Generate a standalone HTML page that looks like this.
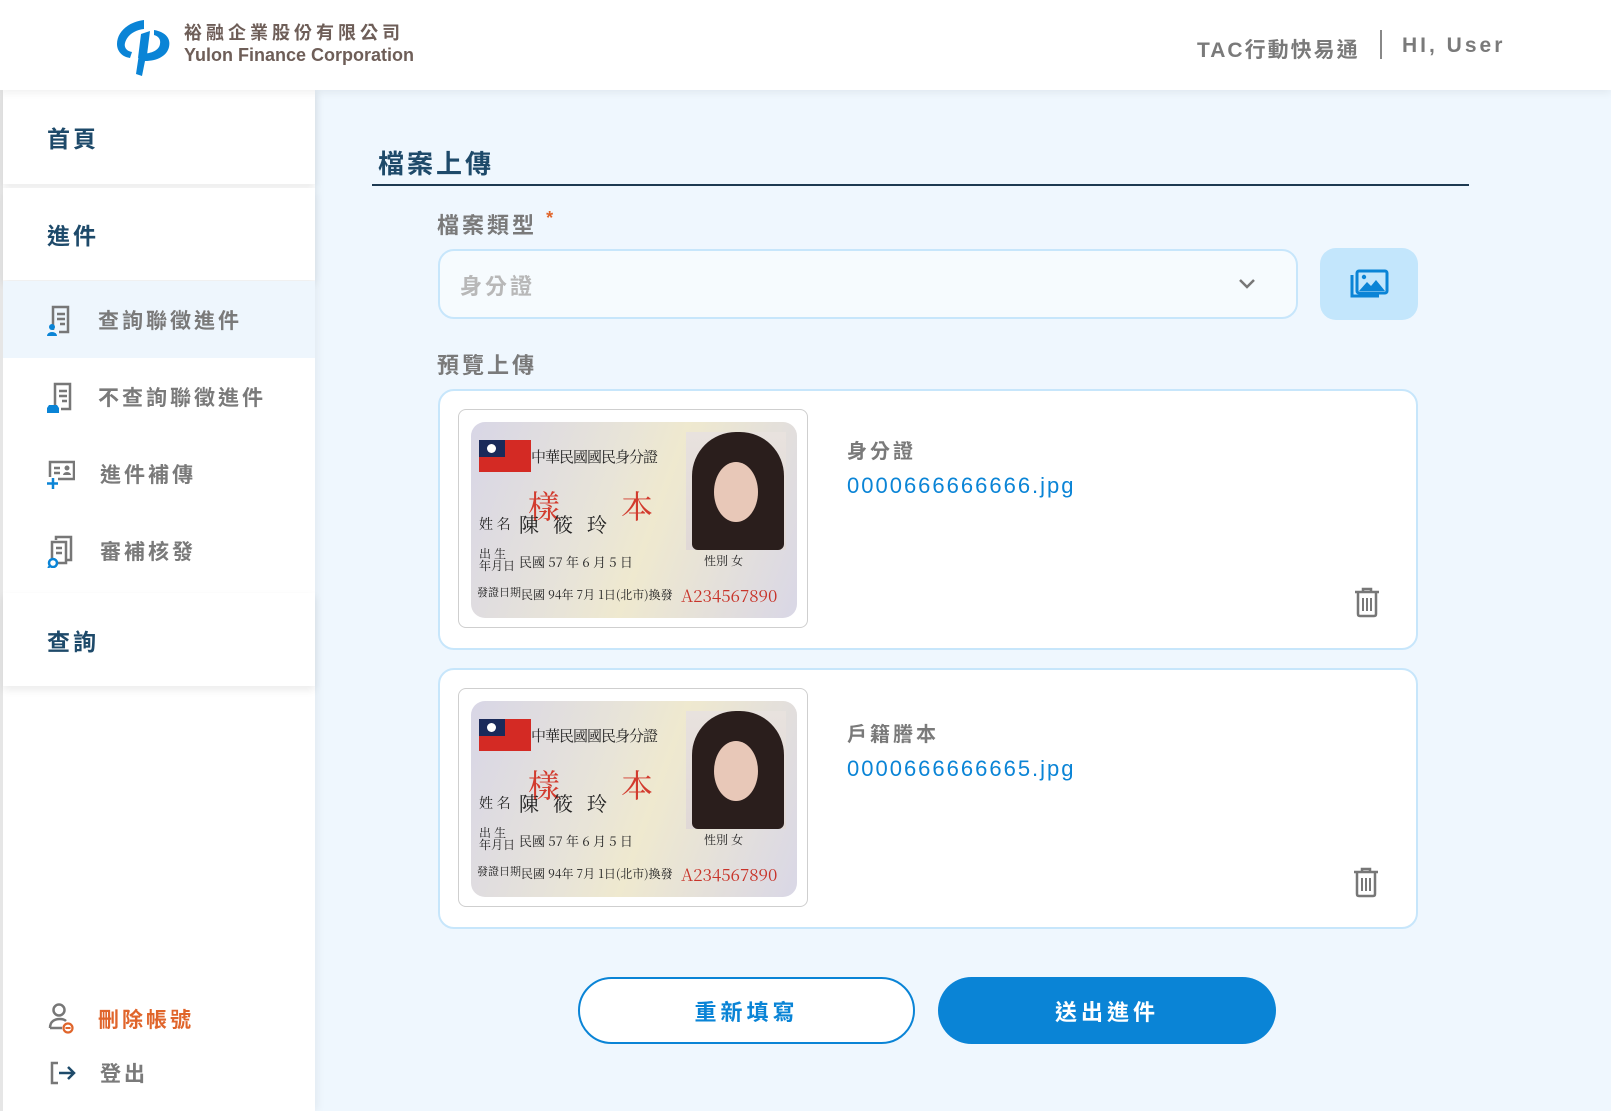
<!DOCTYPE html>
<html><head><meta charset="utf-8">
<style>
*{box-sizing:border-box;margin:0;padding:0}
body{width:1611px;height:1111px;overflow:hidden;background:#eff7fe;font-family:"Liberation Sans","Noto Sans CJK TC",sans-serif;position:relative}
.abs{position:absolute}
.header{left:0;top:0;width:1611px;height:90px;background:#fff;box-shadow:0 3px 8px rgba(0,0,0,.06);z-index:3}
.side{left:0;top:90px;width:315px;height:1021px;background:#fff;border-left:3px solid #e6e6e6;box-shadow:3px 0 8px rgba(0,0,0,.05);z-index:2}
.blk{position:absolute;left:0;width:312px;background:#fff;box-shadow:0 4px 8px rgba(0,0,0,.08);font-weight:bold;color:#1e4a6a;font-size:23px;letter-spacing:3px;padding-left:44px;display:flex;align-items:center}
.it{position:absolute;left:0;width:312px;height:77px;display:flex;align-items:center;padding-left:44px;color:#7a7a7a;font-size:21px;letter-spacing:3px;font-weight:bold}
.it svg{margin-right:25px}
.gray{color:#7a7a7a}
.card{background:#fff;border:2.5px solid #c7e6fb;border-radius:16px}
.idc{position:absolute;left:18px;top:18px;width:350px;height:219px;border:1px solid #cfcfcf;border-radius:8px;background:#fff}
.idi{position:absolute;left:12px;top:12px;width:326px;height:196px;border-radius:14px;background:linear-gradient(110deg,#d8d6e6,#e8e4d8 40%,#efe9cf 55%,#d9d7e6);overflow:hidden;font-family:"Noto Serif CJK SC","Liberation Serif",serif;color:#222}
</style></head><body>
<div class="abs header">
 <svg class="abs" style="left:114px;top:16px" width="60" height="60" viewBox="0 0 60 60">
  <path d="M30 4 C14 6 3 16 3 28 C3 36 9 41 16 42 L18 36 C12 35 10 31 11 27 C13 19 21 14 30 13 Z" fill="#0a84d6"/>
  <path d="M27 18 L36 15 L33 39 L24 42 Z" fill="#0a84d6"/>
  <path d="M40 14 C52 16 57 23 55 31 C53 40 43 45 31 45 L28 60 L22 58 L25 38 C36 38 45 35 46 28 C47 23 44 20 40 19 Z" fill="#0a84d6"/>
 </svg>
 <div class="abs" style="left:184px;top:19px;font-size:18px;color:#6e5e58;letter-spacing:4px;font-weight:bold">裕融企業股份有限公司</div>
 <div class="abs" style="left:184px;top:45px;font-size:18px;color:#6e5e58;font-weight:bold">Yulon Finance Corporation</div>
 <div class="abs gray" style="left:1197px;top:34px;font-size:21px;letter-spacing:2px;font-weight:bold">TAC行動快易通</div>
 <div class="abs" style="left:1380px;top:30px;width:2px;height:29px;background:#888"></div>
 <div class="abs gray" style="left:1402px;top:34px;font-size:21px;letter-spacing:3px;font-weight:bold">HI, User</div>
</div>
<div class="abs side">
 <div class="blk" style="top:0;height:94px">首頁</div>
 <div class="blk" style="top:98px;height:92px">進件</div>
 <div class="it" style="top:191px;background:#eef6fd">
  <svg width="26" height="34" viewBox="0 0 26 34"><path d="M6 27 V4 H21 V29 H12" fill="none" stroke="#777" stroke-width="2.5"/><path d="M10 11h8M10 16h8M13 21h5" stroke="#777" stroke-width="2.5"/><circle cx="5" cy="24" r="3" fill="#0a84d6"/><path d="M0 33 a5 4 0 0 1 10 0z" fill="#0a84d6"/></svg>查詢聯徵進件</div>
 <div class="it" style="top:268px">
  <svg width="26" height="34" viewBox="0 0 26 34"><path d="M8 25 V4 H23 V29 H14" fill="none" stroke="#777" stroke-width="2.5"/><path d="M12 11h8M12 16h8M15 21h5" stroke="#777" stroke-width="2.5"/><path d="M0 33 V28 L2 25 H10 L12 28 V33Z" fill="#0a84d6"/></svg>不查詢聯徵進件</div>
 <div class="it" style="top:345px">
  <svg width="28" height="34" viewBox="0 0 28 34"><path d="M3 20 V5 H27 V22 H11" fill="none" stroke="#777" stroke-width="2.5"/><path d="M7 11h6M7 16h6" stroke="#777" stroke-width="2.5"/><circle cx="20" cy="11" r="2.5" fill="#777"/><path d="M16 18a4 3 0 0 1 8 0z" fill="#777"/><path d="M6 21v11M0 26.5h11" stroke="#0a84d6" stroke-width="2.5"/></svg>進件補傳</div>
 <div class="it" style="top:422px">
  <svg width="28" height="34" viewBox="0 0 28 34"><path d="M9 6 V3 H24 V26 H20" fill="none" stroke="#777" stroke-width="2.5"/><path d="M5 24 V8 H19 V29 H11" fill="none" stroke="#777" stroke-width="2.5"/><path d="M9 14h6M9 19h6" stroke="#777" stroke-width="2.5"/><circle cx="6" cy="29" r="4" fill="none" stroke="#0a84d6" stroke-width="2.5"/><path d="M3 32l-2 2" stroke="#0a84d6" stroke-width="2"/></svg>審補核發</div>
 <div class="blk" style="top:503px;height:93px">查詢</div>
 <svg class="abs" style="left:45px;top:912px" width="28" height="34" viewBox="0 0 28 34"><circle cx="11" cy="8" r="5.5" fill="none" stroke="#777" stroke-width="2.5"/><path d="M2 26 C2 19 7 17 12 17 C15 17 17 18 18 19" fill="none" stroke="#777" stroke-width="2.5"/><path d="M2 26 H14" stroke="#777" stroke-width="2.5"/><circle cx="20" cy="26" r="4.5" fill="none" stroke="#e0652b" stroke-width="2.2"/><path d="M17.5 26h5" stroke="#e0652b" stroke-width="2"/></svg>
 <div class="abs" style="left:95px;top:914px;color:#e0652b;font-size:21px;letter-spacing:3px;font-weight:bold">刪除帳號</div>
 <svg class="abs" style="left:47px;top:970px" width="28" height="26" viewBox="0 0 28 26"><path d="M8 3 H2 V23 H8" fill="none" stroke="#777" stroke-width="2.5"/><path d="M9 13 H24 M18 7 L24 13 L18 19" fill="none" stroke="#1e4a6a" stroke-width="2.5"/></svg>
 <div class="abs gray" style="left:97px;top:968px;font-size:21px;letter-spacing:3px;font-weight:bold">登出</div>
</div>

<div class="abs" style="left:378px;top:144px;font-size:26px;font-weight:bold;color:#1e4a6a;letter-spacing:3px">檔案上傳</div>
<div class="abs" style="left:372px;top:184px;width:1097px;height:2px;background:#1e3a52"></div>
<div class="abs gray" style="left:437px;top:208px;font-size:22px;font-weight:bold;letter-spacing:3px">檔案類型 <span style="color:#e0652b;font-size:18px;vertical-align:top">*</span></div>
<div class="abs" style="left:438px;top:249px;width:860px;height:70px;border:2.5px solid #c7e6fb;border-radius:16px;background:#f6fbfe">
 <div class="abs" style="left:20px;top:18px;font-size:22px;color:#b8b8b8;letter-spacing:3px;font-weight:bold">身分證</div>
 <svg class="abs" style="left:797px;top:26px" width="20" height="14" viewBox="0 0 20 14"><path d="M3 3 L10 10 L17 3" fill="none" stroke="#777" stroke-width="2.5"/></svg>
</div>
<div class="abs" style="left:1320px;top:248px;width:98px;height:72px;border-radius:16px;background:#c3e6fc">
 <svg class="abs" style="left:29px;top:20px" width="40" height="32" viewBox="0 0 40 32"><path d="M3 7 V28 H30" fill="none" stroke="#0a84d6" stroke-width="3"/><rect x="8" y="3" width="30" height="22" rx="2" fill="none" stroke="#0a84d6" stroke-width="3"/><circle cx="15" cy="9" r="2.2" fill="#0a84d6"/><path d="M10 23 L18 14 L22 18 L27 12 L36 23Z" fill="#0a84d6"/></svg>
</div>
<div class="abs gray" style="left:437px;top:348px;font-size:22px;font-weight:bold;letter-spacing:3px">預覽上傳</div>

<div class="abs card" style="left:438px;top:389px;width:980px;height:261px">
 <div class="idc"><div class="idi">
  <div class="abs" style="left:8px;top:18px;width:52px;height:32px;background:#d42a24"><div style="width:26px;height:17px;background:#1a2a5a;position:relative"><div style="position:absolute;left:8px;top:4px;width:9px;height:9px;border-radius:50%;background:#fff"></div></div></div>
  <div class="abs" style="left:60px;top:24px;font-size:15px;letter-spacing:-1px">中華民國國民身分證</div>
  <div class="abs" style="left:57px;top:60px;font-size:32px;color:#d23b2e">樣</div>
  <div class="abs" style="left:150px;top:60px;font-size:32px;color:#d23b2e">本</div>
  <div class="abs" style="left:8px;top:92px;font-size:14px">姓 名</div>
  <div class="abs" style="left:48px;top:87px;font-size:20px;letter-spacing:14px">陳筱玲</div>
  <div class="abs" style="left:8px;top:126px;font-size:12px;line-height:12px">出 生<br>年月日</div>
  <div class="abs" style="left:48px;top:130px;font-size:13px">民國 57 年 6 月 5 日</div>
  <div class="abs" style="left:6px;top:162px;font-size:11px">發證日期</div>
  <div class="abs" style="left:50px;top:164px;font-size:12px">民國 94年 7月 1日(北市)換發</div>
  <div class="abs" style="left:233px;top:130px;font-size:12px">性別 女</div>
  <div class="abs" style="left:210px;top:160px;font-size:17px;color:#c8342a">A234567890</div>
  <div class="abs" style="left:215px;top:10px;width:100px;height:118px;background:linear-gradient(#e8e2de,#e0d8d6)"><div style="position:absolute;left:6px;top:0;width:92px;height:118px;border-radius:44px 44px 6px 6px;background:#2a1e1c"></div><div style="position:absolute;left:28px;top:30px;width:44px;height:60px;border-radius:50%;background:#e8c8b8"></div></div>
 </div></div>
 <div class="abs gray" style="left:407px;top:44px;font-size:20px;font-weight:bold;letter-spacing:3px">身分證</div>
 <div class="abs" style="left:407px;top:82px;font-size:22px;color:#0a84d6;letter-spacing:2px">0000666666666.jpg</div>
 <svg class="abs" style="left:913px;top:195px" width="28" height="32" viewBox="0 0 28 32"><path d="M2 6 H26 M10 6 V3 H18 V6" fill="none" stroke="#777" stroke-width="2.5"/><path d="M5 7 V28 Q5 30 7 30 H21 Q23 30 23 28 V7" fill="none" stroke="#777" stroke-width="2.5"/><path d="M10 12 V25 M14 12 V25 M18 12 V25" stroke="#777" stroke-width="2"/></svg>
</div>

<div class="abs card" style="left:438px;top:668px;width:980px;height:261px">
 <div class="idc"><div class="idi">
  <div class="abs" style="left:8px;top:18px;width:52px;height:32px;background:#d42a24"><div style="width:26px;height:17px;background:#1a2a5a;position:relative"><div style="position:absolute;left:8px;top:4px;width:9px;height:9px;border-radius:50%;background:#fff"></div></div></div>
  <div class="abs" style="left:60px;top:24px;font-size:15px;letter-spacing:-1px">中華民國國民身分證</div>
  <div class="abs" style="left:57px;top:60px;font-size:32px;color:#d23b2e">樣</div>
  <div class="abs" style="left:150px;top:60px;font-size:32px;color:#d23b2e">本</div>
  <div class="abs" style="left:8px;top:92px;font-size:14px">姓 名</div>
  <div class="abs" style="left:48px;top:87px;font-size:20px;letter-spacing:14px">陳筱玲</div>
  <div class="abs" style="left:8px;top:126px;font-size:12px;line-height:12px">出 生<br>年月日</div>
  <div class="abs" style="left:48px;top:130px;font-size:13px">民國 57 年 6 月 5 日</div>
  <div class="abs" style="left:6px;top:162px;font-size:11px">發證日期</div>
  <div class="abs" style="left:50px;top:164px;font-size:12px">民國 94年 7月 1日(北市)換發</div>
  <div class="abs" style="left:233px;top:130px;font-size:12px">性別 女</div>
  <div class="abs" style="left:210px;top:160px;font-size:17px;color:#c8342a">A234567890</div>
  <div class="abs" style="left:215px;top:10px;width:100px;height:118px;background:linear-gradient(#e8e2de,#e0d8d6)"><div style="position:absolute;left:6px;top:0;width:92px;height:118px;border-radius:44px 44px 6px 6px;background:#2a1e1c"></div><div style="position:absolute;left:28px;top:30px;width:44px;height:60px;border-radius:50%;background:#e8c8b8"></div></div>
 </div></div>
 <div class="abs gray" style="left:407px;top:48px;font-size:20px;font-weight:bold;letter-spacing:3px">戶籍謄本</div>
 <div class="abs" style="left:407px;top:86px;font-size:22px;color:#0a84d6;letter-spacing:2px">0000666666665.jpg</div>
 <svg class="abs" style="left:912px;top:196px" width="28" height="32" viewBox="0 0 28 32"><path d="M2 6 H26 M10 6 V3 H18 V6" fill="none" stroke="#777" stroke-width="2.5"/><path d="M5 7 V28 Q5 30 7 30 H21 Q23 30 23 28 V7" fill="none" stroke="#777" stroke-width="2.5"/><path d="M10 12 V25 M14 12 V25 M18 12 V25" stroke="#777" stroke-width="2"/></svg>
</div>

<div class="abs" style="left:578px;top:977px;width:337px;height:67px;border:2.5px solid #0a84d6;border-radius:34px;background:#fff;color:#0a84d6;font-size:22px;font-weight:bold;letter-spacing:4px;display:flex;align-items:center;justify-content:center">重新填寫</div>
<div class="abs" style="left:938px;top:977px;width:338px;height:67px;border-radius:34px;background:#0a84d6;color:#fff;font-size:22px;font-weight:bold;letter-spacing:4px;display:flex;align-items:center;justify-content:center">送出進件</div>
</body></html>
